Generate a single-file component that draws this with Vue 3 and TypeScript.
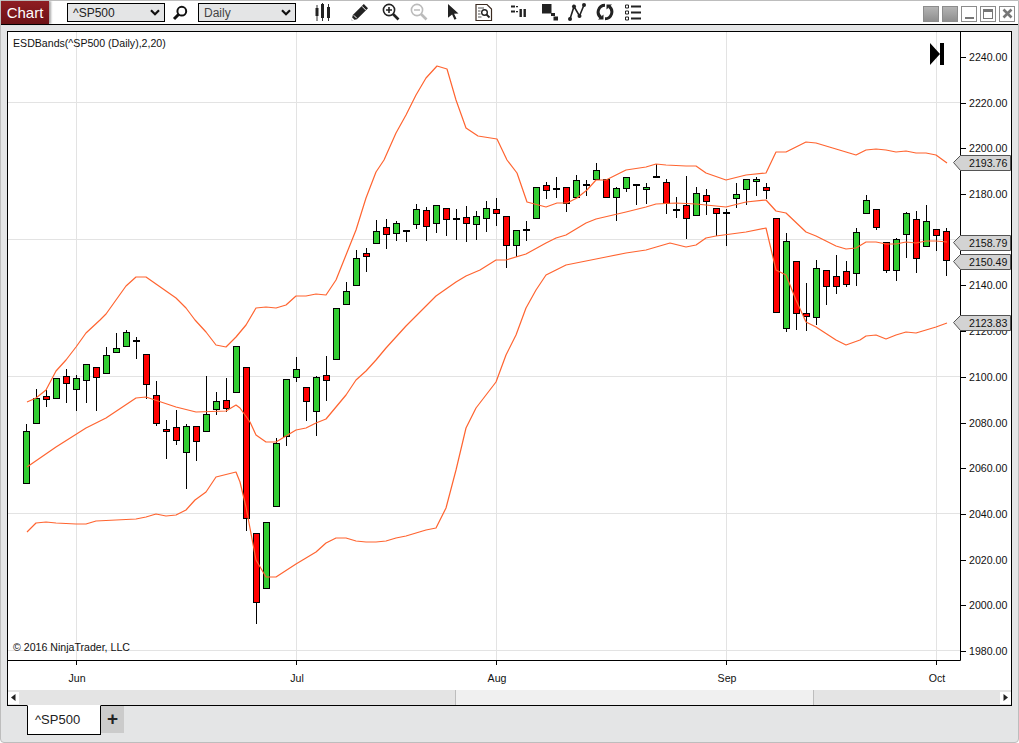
<template>
  <div class="window">
    <div class="toolbar">
      <div class="chart-tab">Chart</div>
      <div class="select sel-first">
        <span>^SP500</span>
        <svg width="10" height="7" viewBox="0 0 10 7"><path d="M1 1.200l4 4 4-4" fill="none" stroke="#111" stroke-width="2.200" /></svg>
      </div>
      <svg class="search" width="16" height="16" viewBox="0 0 16 16">
        <circle cx="9.800" cy="6.200" r="4.400" fill="none" stroke="#111" stroke-width="2" />
        <path d="M6.500 9.500L2 14" stroke="#111" stroke-width="3" />
      </svg>
      <div class="select sel-second">
        <span class="muted">Daily</span>
        <svg width="10" height="7" viewBox="0 0 10 7"><path d="M1 1.200l4 4 4-4" fill="none" stroke="#111" stroke-width="2.200" /></svg>
      </div>

      <svg class="tool g18" viewBox="0 0 18 18">
        <path d="M3 2v16M8.500 0v18M14.500 1v17" stroke="#333" stroke-width="1" />
        <path d="M1.500 5h3v8h-3zM7 1h3v14H7zM13 4h3v11h-3z" fill="#222" />
      </svg>
      <svg class="tool g19" viewBox="0 0 18 18">
        <path d="M.5 17.500l1.300-5.500L12.800 1l4.200 4.200L6 16.200z" fill="#222" />
        <path d="M2.800 12.300l3 3M11 3.300l3.900 3.900" stroke="#fff" stroke-width="1" />
        <path d="M.5 17.500l.8-3 2.200 2.200z" fill="#fff" />
      </svg>
      <svg class="tool g13" viewBox="0 0 18 18">
        <circle cx="7" cy="7" r="5.600" fill="none" stroke="#222" stroke-width="1.600" />
        <path d="M4 7h6M7 4v6" stroke="#222" stroke-width="1.600" />
        <path d="M11 11l5.500 5.500" stroke="#222" stroke-width="2.600" />
      </svg>
      <svg class="tool g10" viewBox="0 0 18 18">
        <circle cx="7" cy="7" r="5.600" fill="none" stroke="#bbb" stroke-width="1.600" />
        <path d="M4 7h6" stroke="#bbb" stroke-width="1.600" />
        <path d="M11 11l5.500 5.500" stroke="#bbb" stroke-width="2.600" />
      </svg>
      <svg class="tool g16" viewBox="0 0 18 18">
        <path d="M4 1l10.500 9.400-4.400.4 2.400 5-2 1-2.400-5.200L4 14.800z" fill="#222" />
      </svg>
      <svg class="tool g13" viewBox="0 0 18 18">
        <path d="M1 1.500h11l4.500 4.500v11.500H1z" fill="#fff" stroke="#3a2a20" stroke-width="1.200" />
        <path d="M3 5h6M3 8h2.500M3 11h2.500M3 14h3.500" stroke="#555" stroke-width="1" />
        <circle cx="9.500" cy="9.500" r="2.800" fill="none" stroke="#222" stroke-width="1.400" />
        <path d="M11.500 11.500l3 3" stroke="#222" stroke-width="1.800" />
      </svg>
      <svg class="tool g16" viewBox="0 0 18 18">
        <path d="M2 2.500h4v2H2zM7 3h2v1.200H7zM2 7.500h4v2H2zM7 8h2v1.200H7z" fill="#222" />
        <path d="M10.500 6h2.400v8h-2.400zM14.500 6h2.400v8h-2.400z" fill="#222" />
      </svg>
      <svg class="tool g14" viewBox="0 0 18 18">
        <path d="M1 1h9.500v9.500H1zM10 10h4v3h-4zM12.500 13.500h4.500v4h-4.500z" fill="#222" />
      </svg>
      <svg class="tool g9" viewBox="0 0 18 18">
        <path d="M2 16L6 3.500l5.500 9.500L16 2" fill="none" stroke="#222" stroke-width="1.600" />
        <circle cx="2" cy="16" r="2" fill="#222" />
        <circle cx="6" cy="3.500" r="2" fill="#222" />
        <circle cx="11.500" cy="13" r="2" fill="#222" />
        <circle cx="16" cy="2" r="2" fill="#222" />
      </svg>
      <svg class="tool g10" viewBox="0 0 18 18">
        <path d="M9 2.200a6.800 6.800 0 0 0-4 12.300" fill="none" stroke="#222" stroke-width="3" />
        <path d="M9 15.800a6.800 6.800 0 0 0 4-12.300" fill="none" stroke="#222" stroke-width="3" />
        <path d="M2 16.500h5.500v-5zM16 1.500h-5.500v5z" fill="#222" />
      </svg>
      <svg class="tool g10" viewBox="0 0 18 18">
        <path d="M1.500 2h3v3h-3zM1.500 8h3v3h-3zM1.500 14h3v3h-3z" fill="#fff" stroke="#222" stroke-width="1" />
        <path d="M7 3.500h10M7 9.500h10M7 15.500h10" stroke="#222" stroke-width="1.800" />
      </svg>

      <div class="win-buttons">
        <span class="win-btn solid"></span>
        <span class="win-btn solid"></span>
        <span class="win-btn"><i class="min-mark"></i></span>
        <span class="win-btn"><i class="max-mark"></i></span>
        <span class="win-btn">
          <svg width="11" height="11" viewBox="0 0 11 11"><path d="M1.500 1.500l8 8M9.500 1.500l-8 8" stroke="#777" stroke-width="2.600" /></svg>
        </span>
      </div>
    </div>

    <div class="content">
      <div class="frame">
        <svg class="canvas" width="1003" height="658" viewBox="8 32 1003 658">
          <rect x="8" y="32" width="1003" height="658" fill="#fff" />
          <g stroke="#e3e3e3" stroke-width="1">
            <line v-for="m in months" :key="m.label" :x1="m.x + 0.5" y1="32" :x2="m.x + 0.5" y2="660" />
            <line v-for="y in gridY" :key="y" x1="8" :y1="y + 0.5" x2="960" :y2="y + 0.5" />
          </g>

          <g v-for="c in candles" :key="c.x">
            <line :x1="c.x + 0.5" :y1="c.high" :x2="c.x + 0.5" :y2="c.low" stroke="#000" />
            <rect
              :x="c.x - 2.5"
              :y="c.top + 0.5"
              width="6"
              :height="Math.max(c.bottom - c.top - 1, 0.5)"
              :fill="c.color"
              stroke="#000"
            />
          </g>

          <polyline class="band" :points="upper" />
          <polyline class="band" :points="middle" />
          <polyline class="band" :points="lower" />

          <text class="label" x="13" y="47">ESDBands(^SP500 (Daily),2,20)</text>
          <text class="label" x="13" y="651">© 2016 NinjaTrader, LLC</text>
          <path d="M930 43l10 11-10 11zM940 43h4v22h-4z" fill="#000" />

          <path d="M8 660.500h952.500V32" fill="none" stroke="#000" />
          <g v-for="t in ticks" :key="t.label">
            <line x1="960" :y1="t.y + 0.5" x2="966" :y2="t.y + 0.5" stroke="#000" />
            <text class="label" x="969" :y="t.y + 4">{{ t.label }}</text>
          </g>
          <g v-for="m in months" :key="'t' + m.label">
            <line :x1="m.x + 0.5" y1="660" :x2="m.x + 0.5" y2="665" stroke="#000" />
            <text class="label" :x="m.x + 1" y="682" text-anchor="middle">{{ m.label }}</text>
          </g>

          <g v-for="f in flags" :key="f.label">
            <path
              :d="`M953.500 ${f.y + 0.5}l7-7h50v15h-50z`"
              fill="#d3d3d3"
              stroke="#555"
            />
            <text class="label" x="969" :y="f.y + 4.500">{{ f.label }}</text>
          </g>
        </svg>

        <div class="scrollbar">
          <div class="scroll-btn">
            <svg width="5" height="7" viewBox="0 0 5 7"><path d="M4.500 0v7L0 3.500z" fill="#222" /></svg>
          </div>
          <div class="scroll-track">
            <div class="scroll-thumb"></div>
          </div>
          <div class="scroll-btn">
            <svg width="5" height="7" viewBox="0 0 5 7"><path d="M.5 0v7L5 3.500z" fill="#222" /></svg>
          </div>
        </div>
      </div>

      <div class="tabs">
        <div class="tab">^SP500</div>
        <div class="add-tab">+</div>
      </div>
    </div>
  </div>
</template>

<script setup lang="ts">
type Row = [number, number, number, number, number]

const G = 1
const R = 0

// high, body top, body bottom, low, colour - one row per bar, 10px apart
const rows: Row[] = [
  [424, 431, 484, 484, G], [389, 398, 424, 424, G], [390, 396, 400, 407, R], [378, 378, 399, 399, G],
  [369, 376, 384, 403, R], [375, 378, 390, 411, G], [364, 364, 381, 403, G], [367, 367, 378, 411, R],
  [347, 355, 374, 374, G], [333, 348, 353, 353, G], [330, 332, 347, 347, G], [337, 340, 342, 359, R],
  [354, 354, 385, 399, R], [381, 395, 424, 426, R], [420, 429, 432, 459, R], [410, 427, 441, 445, R],
  [424, 426, 453, 489, G], [426, 426, 442, 461, R], [376, 414, 432, 432, G], [392, 401, 410, 415, G],
  [378, 400, 409, 412, R], [346, 346, 393, 393, G], [367, 367, 519, 531, R], [533, 533, 603, 624, R],
  [522, 522, 589, 589, G], [438, 443, 507, 507, G], [379, 379, 437, 446, G], [357, 369, 378, 382, G],
  [387, 387, 402, 421, R], [376, 377, 412, 436, G], [356, 375, 381, 401, R], [308, 308, 360, 360, G],
  [282, 291, 305, 305, G], [250, 258, 286, 286, G], [248, 253, 257, 272, R], [220, 231, 244, 244, G],
  [219, 227, 235, 249, R], [221, 223, 234, 241, G], [230, 230, 232, 242, R], [204, 209, 225, 229, G],
  [207, 210, 227, 241, R], [205, 205, 224, 233, G], [208, 208, 220, 236, R], [209, 218, 220, 240, R],
  [206, 217, 224, 242, R], [211, 216, 225, 240, G], [201, 208, 219, 232, G], [198, 209, 214, 226, R],
  [216, 216, 246, 268, R], [230, 230, 246, 257, G], [221, 229, 231, 241, G], [187, 187, 219, 219, G],
  [182, 185, 191, 199, R], [177, 188, 190, 198, R], [187, 187, 204, 212, R], [175, 180, 198, 198, G],
  [180, 184, 186, 196, R], [163, 170, 180, 180, G], [179, 179, 198, 198, R], [187, 188, 198, 221, G],
  [177, 177, 189, 192, G], [185, 184, 186, 205, R], [183, 187, 190, 204, G], [164, 176, 178, 178, R],
  [179, 182, 204, 214, R], [197, 209, 211, 218, R], [176, 205, 219, 239, R], [187, 193, 216, 216, G],
  [189, 195, 202, 215, R], [208, 208, 214, 236, R], [209, 212, 214, 246, R], [183, 194, 199, 208, G],
  [179, 179, 190, 205, G], [177, 179, 182, 196, G], [183, 187, 191, 199, R], [218, 218, 313, 313, R],
  [233, 241, 329, 332, G], [261, 261, 314, 330, R], [283, 313, 317, 331, R], [260, 268, 318, 325, G],
  [270, 270, 287, 305, R], [255, 276, 287, 294, R], [261, 271, 285, 287, R], [228, 232, 274, 286, G],
  [195, 200, 214, 214, G], [209, 209, 228, 230, R], [242, 242, 271, 273, R], [238, 239, 271, 281, G],
  [212, 213, 235, 258, G], [211, 219, 259, 273, R], [205, 221, 247, 247, G], [229, 229, 236, 251, R],
  [228, 231, 261, 276, R],
]

const candles = rows.map((r, i) => ({
  x: 26 + i * 10,
  high: r[0],
  top: r[1],
  bottom: r[2],
  low: r[3],
  color: r[4] === G ? '#32cd32' : '#ff0000',
}))

const upper =
  '27,402 36,398 46,390 56,371 66,360 76,347 86,333 100,320 106,314 116,300 126,286 136,277 146,277 156,284 166,291 176,298 186,308 195,320 206,332 216,345 226,347 236,337 246,325 256,308 266,307 276,308 286,305 296,296 306,296 316,294 326,295 336,280 346,255 356,230 366,198 376,172 384,160 396,133 406,115 416,95 426,78 437,66 447,69 456,100 466,128 478,136 497,139 507,160 517,173 527,202 546,207 557,203 567,203 577,198 587,190 596,180 606,180 626,170 646,167 656,164 666,165 686,166 696,166 706,173 726,180 746,175 766,173 776,152 786,152 796,147 806,142 816,143 826,146 836,149 846,152 856,155 866,150 876,149 886,150 896,152 906,151 916,153 926,153 936,155 947,163'
const middle =
  '27,467 56,447 86,428 106,418 136,398 146,397 176,407 196,412 226,411 236,405 240,408 250,422 256,435 266,442 276,442 296,430 306,428 316,423 326,419 336,407 346,395 356,380 366,371 376,360 386,348 396,337 406,326 416,316 426,306 436,296 446,289 456,282 466,276 480,270 496,260 506,260 526,254 546,243 556,238 566,235 586,223 596,219 626,212 646,207 656,204 676,203 696,204 726,207 746,202 766,200 776,211 786,213 806,232 816,236 836,246 846,249 856,248 866,242 876,242 886,244 896,244 906,242 916,243 926,241 936,241 947,242'
const lower =
  '27,532 36,523 46,522 56,523 76,524 86,524 96,521 116,520 136,519 146,517 156,514 166,516 176,515 186,510 195,500 206,492 216,477 236,472 240,482 246,507 256,560 266,577 276,577 296,564 306,558 316,552 326,543 336,538 346,538 356,541 366,542 376,542 386,541 396,538 406,536 416,533 426,530 436,528 446,508 456,470 466,428 476,408 486,395 496,382 506,355 516,335 526,308 536,290 546,275 556,270 566,265 586,261 606,257 626,253 646,250 670,243 686,247 696,245 706,238 716,236 746,232 766,228 776,270 786,275 796,300 806,322 816,327 836,340 846,345 860,340 866,336 876,335 886,339 896,335 906,332 916,333 926,330 936,327 947,323'

const months = [
  { label: 'Jun', x: 76 },
  { label: 'Jul', x: 296 },
  { label: 'Aug', x: 496 },
  { label: 'Sep', x: 726 },
  { label: 'Oct', x: 936 },
]

const gridY = [102, 239, 376, 513, 650]

const ticks = Array.from({ length: 14 }, (_, i) => ({
  label: (2240 - i * 20).toFixed(2),
  y: Math.round(57 + i * 45.69),
}))

const flags = [
  { label: '2193.76', y: 162 },
  { label: '2158.79', y: 242 },
  { label: '2150.49', y: 261 },
  { label: '2123.83', y: 322 },
]
</script>

<style scoped>
.window {
  width: 1019px;
  height: 743px;
  box-sizing: border-box;
  display: flex;
  flex-direction: column;
  background: #e4e5e6;
  border: 1px solid #bdbdbd;
  border-radius: 0 0 4px 4px;
  font-family: "Liberation Sans", Arial, sans-serif;
  overflow: hidden;
}

.toolbar {
  height: 23px;
  flex: none;
  display: flex;
  align-items: center;
  background: #fff;
  border-bottom: 1px solid #000;
}

.chart-tab {
  width: 48px;
  height: 23px;
  line-height: 23px;
  text-align: center;
  color: #fff;
  font-size: 15px;
  background: linear-gradient(#8f1d22, #6d1216);
  box-shadow: 2px 0 2px rgba(0, 0, 0, 0.35);
}

.select {
  width: 98px;
  height: 19px;
  box-sizing: border-box;
  display: flex;
  align-items: center;
  justify-content: space-between;
  padding: 0 4px 0 5px;
  border: 1px solid #000;
  background: #e4e5e6;
  color: #222;
  font-size: 12px;
}

.sel-first {
  margin-left: 18px;
}

.sel-second {
  margin-left: 10px;
}

.muted {
  color: #444;
}

.search {
  margin-left: 7px;
  margin-top: 1px;
}

.tool {
  width: 18px;
  height: 18px;
  flex: none;
  margin-bottom: 1px;
}

.g9 { margin-left: 9px; }
.g10 { margin-left: 10px; }
.g13 { margin-left: 13px; }
.g14 { margin-left: 14px; }
.g16 { margin-left: 16px; }
.g18 { margin-left: 18px; }
.g19 { margin-left: 19px; }

.win-buttons {
  margin-left: auto;
  margin-right: 3px;
  margin-top: 2px;
  display: flex;
  gap: 3px;
}

.win-btn {
  width: 16px;
  height: 16px;
  box-sizing: border-box;
  display: flex;
  align-items: center;
  justify-content: center;
  border: 1px solid #8c8c8c;
  background: #fff;
}

.win-btn.solid {
  background: linear-gradient(#b4b4b4, #8f8f8f);
}

.min-mark {
  width: 9px;
  height: 2px;
  margin-top: 8px;
  background: #777;
}

.max-mark {
  width: 10px;
  height: 10px;
  box-sizing: border-box;
  border: 1px solid #777;
  border-top-width: 3px;
}

.content {
  flex: 1;
  min-height: 0;
  display: flex;
  flex-direction: column;
  padding: 6px 6px 0;
}

.frame {
  height: 675px;
  flex: none;
  display: flex;
  flex-direction: column;
  border: 1px solid #000;
  box-sizing: border-box;
  background: #fff;
}

.canvas {
  display: block;
  flex: none;
}

.band {
  fill: none;
  stroke: #ff6430;
  stroke-width: 1.200;
  stroke-linejoin: round;
}

.label {
  font-size: 10.600px;
  fill: #111;
}

.scrollbar {
  flex: 1;
  display: flex;
  align-items: center;
  background: #e4e4e4;
}

.scroll-btn {
  width: 11px;
  height: 12px;
  flex: none;
  display: flex;
  align-items: center;
  justify-content: center;
  background: #fff;
}

.scroll-track {
  flex: 1;
  height: 100%;
}

.scroll-thumb {
  width: 359px;
  height: 100%;
  box-sizing: border-box;
  margin-left: 436px;
  background: #f0f0f0;
  border: 1px solid #bdbdbd;
  border-width: 0 1px;
}

.tabs {
  display: flex;
  align-items: flex-start;
  padding-left: 20px;
}

.tab {
  width: 74px;
  height: 30px;
  box-sizing: border-box;
  margin-top: -1px;
  border: 1px solid #000;
  border-top-color: #fff;
  background: #fff;
  color: #222;
  font-size: 13px;
  line-height: 28px;
  padding-left: 7px;
}

.add-tab {
  width: 23px;
  height: 27px;
  line-height: 26px;
  text-align: center;
  background: #cbcbcb;
  color: #222;
  font-size: 19px;
  font-weight: 700;
}
</style>

<style>
html,
body {
  background: #fff;
}
</style>
